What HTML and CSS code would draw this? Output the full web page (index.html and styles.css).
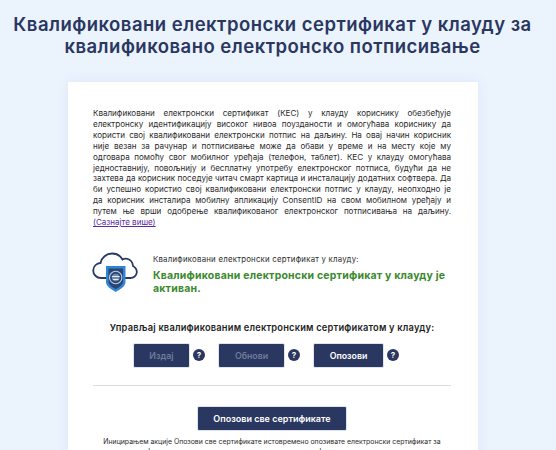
FILE: index.html
```html
<!DOCTYPE html>
<html lang="sr">
<head>
<meta charset="utf-8">
<title>Квалификовани електронски сертификат</title>
<link rel="stylesheet" href="styles.css">
</head>
<body>
<h1 class="title">Квалификовани електронски сертификат у клауду за квалификовано електронско потписивање</h1>
<main class="card">
  <p class="intro">
    <span class="line">Квалификовани електронски сертификат (КЕС) у клауду кориснику обезбеђује</span>
    <span class="line">електронску идентификацију високог нивоа поузданости и омогућава кориснику да</span>
    <span class="line">користи свој квалификовани електронски потпис на даљину. На овај начин корисник</span>
    <span class="line">није везан за рачунар и потписивање може да обави у време и на месту које му</span>
    <span class="line">одговара помоћу свог мобилног уређаја (телефон, таблет). КЕС у клауду омогућава</span>
    <span class="line">једноставнију, повољнију и бесплатну употребу електронског потписа, будући да не</span>
    <span class="line">захтева да корисник поседује читач смарт картица и инсталацију додатних софтвера. Да</span>
    <span class="line">би успешно користио свој квалификовани електронски потпис у клауду, неопходно је</span>
    <span class="line">да корисник инсталира мобилну апликацију ConsentID на свом мобилном уређају и</span>
    <span class="line">путем ње врши одобрење квалификованог електронског потписивања на даљину.</span>
    <a class="more" href="#">(Сазнајте више)</a>
  </p>
  <section class="status">
    <svg class="logo" viewBox="0 0 46 41" aria-hidden="true">
      <path d="M14 26H9C4.500 26 1.200 22.500 1.200 18.500C1.200 14.500 4.500 11 8.500 11C9.500 5.500 14.500 1.500 20 1.500C24.500 1.500 28.500 3.800 30.500 7.500C31.800 6.800 33.200 6.500 34.500 6.700C38.500 7.200 41 10.500 41 14C43.500 15.500 45 18 44.800 20.500C44.500 23.800 41.500 26 38.500 26H33" fill="none" stroke="#2a3a64" stroke-width="1.800" stroke-linecap="round"/>
      <path d="M14 14H33.500V30C33.500 34 29 37 23.700 40C18.500 37 14 34 14 30Z" fill="#2f86d8"/>
      <path d="M16.500 16.500H31V29.500C31 32.800 27.500 35 23.700 37.200C20 35 16.500 32.800 16.500 29.500Z" fill="#2d4472"/>
      <circle cx="23.700" cy="25.500" r="6.200" fill="none" stroke="#b9cfe6" stroke-width="1.100"/>
      <circle cx="23.700" cy="25.500" r="3.800" fill="#6f8bb0"/>
      <path d="M19.800 24.500H27.600M21 27.500H26.400" stroke="#dfe9f3" stroke-width="1"/>
    </svg>
    <div class="status-text">
      <p class="status-label">Квалификовани електронски сертификат у клауду:</p>
      <p class="status-value">Квалификовани електронски сертификат у клауду је активан.</p>
    </div>
  </section>
  <h2 class="manage">Управљај квалификованим електронским сертификатом у клауду:</h2>
  <div class="actions">
    <button class="btn btn-issue" disabled>Издај</button><span class="help">?</span>
    <button class="btn btn-renew" disabled>Обнови</button><span class="help">?</span>
    <button class="btn btn-revoke">Опозови</button><span class="help">?</span>
  </div>
  <hr class="rule">
  <div class="revoke-all"><button class="btn btn-all">Опозови све сертификате</button></div>
  <p class="note">Иницирањем акције Опозови све сертификате истовремено опозивате електронски сертификат за квалификовани и напредни електронски потпис и квалификовани електронски печат</p>
</main>
</body>
</html>
```
FILE: styles.css
```css
html, body { margin: 0; height: 450px; overflow: hidden; }
body {
  background: #ebf3fd;
  font-family: Inter, "Noto Sans", sans-serif;
  color: #2b2b2b;
}
.title {
  margin: 0;
  padding: 13px 21px 0 10px;
  font-size: 18.500px;
  line-height: 22px;
  font-weight: 600;
  letter-spacing: .48px;
  text-align: center;
  color: #2a3760;
}
.card {
  width: 358px;
  margin: 25px 0 0 68px;
  padding: 26px 27px 0 25px;
  background: #fff;
  box-shadow: 0 0 12px rgba(120, 150, 190, .12);
  height: 400px;
}
.intro { margin: 0; font-size: 8.050px; line-height: 10.900px; }
.line { display: block; text-align: justify; text-align-last: justify; white-space: nowrap; }
.more { color: #5a2ca0; }
.status { display: flex; align-items: flex-start; gap: 15px; margin-top: 22px; }
.logo { width: 46px; height: 41px; margin: 2px 0 0 -1px; flex: none; }
.status-text { flex: 1; }
.status-label { margin: 4px 0 0; font-size: 7.800px; line-height: 11px; letter-spacing: .24px; }
.status-value { margin: 4px 0 0; font-size: 10.500px; line-height: 13.500px; font-weight: 700; letter-spacing: .2px; color: #3b8a2e; }
.manage { margin: 26px 0 0; font-size: 9.300px; line-height: 12px; font-weight: 600; letter-spacing: .2px; text-align: center; color: #1f1f1f; }
.actions { display: flex; align-items: center; margin: 9px 0 0 40px; }
.btn {
  height: 25px;
  border: 1px solid #dfe5f0;
  border-radius: 2px;
  background: #2a3760;
  color: #fff;
  font: 600 8.800px Inter, "Noto Sans", sans-serif;
  padding: 0;
}
.btn-issue, .btn-renew { color: #6f7b9c; }
.btn-issue { width: 57px; }
.btn-renew { width: 67px; }
.btn-revoke { width: 71px; }
.help {
  width: 12px; height: 12px;
  margin: 0 13px 0 3px;
  border-radius: 50%;
  background: #2a3760;
  color: #fff;
  font-size: 8px;
  font-weight: 700;
  line-height: 12px;
  text-align: center;
}
.help:last-child { margin-right: 0; }
.rule { margin: 17px 0 0; border: 0; border-top: 1px solid #dcdcdc; }
.revoke-all { display: flex; justify-content: center; margin-top: 20px; }
.btn-all { width: 150px; height: 25px; font-size: 9px; }
.note { margin: 6px 0 0; padding: 0 8px; font-size: 6.900px; line-height: 10px; text-align: center; }
```
